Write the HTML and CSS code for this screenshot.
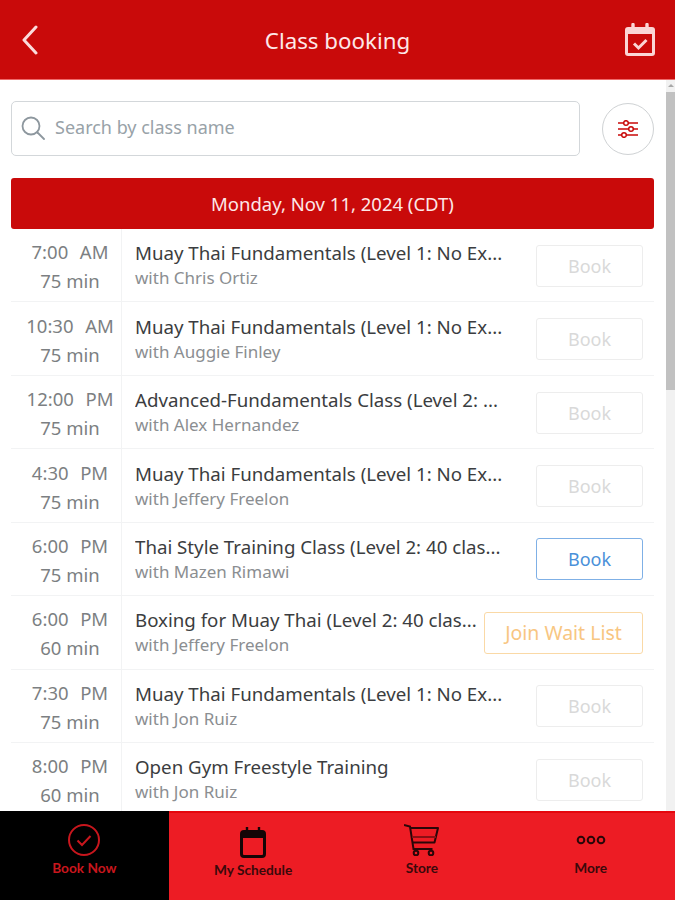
FILE: index.html
```html
<!DOCTYPE html>
<html lang="en">
<head>
<meta charset="utf-8">
<title>Class booking</title>
<link rel="stylesheet" href="styles.css">
</head>
<body>
<div class="app">
  <header class="topbar">
    <svg class="back" width="20" height="30" viewBox="0 0 20 30"><path d="M16 2 L4 15 L16 28" fill="none" stroke="#fbdcdc" stroke-width="3" stroke-linecap="round" stroke-linejoin="round"/></svg>
    <h1 class="title">Class booking</h1>
    <svg class="cal" width="30" height="34" viewBox="0 0 30 34"><path d="M8 1.500v5M22 1.500v5" stroke="#fbd5d5" stroke-width="3.400" stroke-linecap="round"/><path fill="#fbd5d5" d="M3 4h24a3 3 0 0 1 3 3v23a3 3 0 0 1-3 3H3a3 3 0 0 1-3-3V7a3 3 0 0 1 3-3z"/><rect x="3" y="11" width="24" height="19" fill="#c90a0a"/><path d="M9 20.500l4.500 4.500 8-8" fill="none" stroke="#fbd5d5" stroke-width="3"/></svg>
  </header>
  <main class="content">
    <div class="pane">
      <div class="search-row">
        <div class="search">
          <svg width="24" height="24" viewBox="0 0 24 24"><circle cx="10" cy="10" r="8.500" fill="none" stroke="#8d979e" stroke-width="1.800"/><path d="M16.500 16.500l6.500 6.500" stroke="#8d979e" stroke-width="1.800" stroke-linecap="round"/></svg>
          <span class="placeholder">Search by class name</span>
        </div>
        <div class="filter">
          <svg width="20" height="18" viewBox="0 0 20 18"><g stroke="#c90a0a" stroke-width="1.500" fill="none"><path d="M0 3h20M0 9h20M0 15h20"/><circle cx="8" cy="3" r="2.300" fill="#fff"/><circle cx="13" cy="9" r="2.300" fill="#fff"/><circle cx="6" cy="15" r="2.300" fill="#fff"/></g></svg>
        </div>
      </div>
      <div class="date">Monday, Nov 11, 2024 (CDT)</div>
      <div class="list">
        <div class="row"><div class="time"><span>7:00&nbsp; AM</span><span>75 min</span></div><div class="info"><div class="name">Muay Thai Fundamentals (Level 1: No Ex...</div><div class="coach">with Chris Ortiz</div></div><div class="btn off">Book</div></div>
        <div class="row"><div class="time"><span>10:30&nbsp; AM</span><span>75 min</span></div><div class="info"><div class="name">Muay Thai Fundamentals (Level 1: No Ex...</div><div class="coach">with Auggie Finley</div></div><div class="btn off">Book</div></div>
        <div class="row"><div class="time"><span>12:00&nbsp; PM</span><span>75 min</span></div><div class="info"><div class="name">Advanced-Fundamentals Class (Level 2: ...</div><div class="coach">with Alex Hernandez</div></div><div class="btn off">Book</div></div>
        <div class="row"><div class="time"><span>4:30&nbsp; PM</span><span>75 min</span></div><div class="info"><div class="name">Muay Thai Fundamentals (Level 1: No Ex...</div><div class="coach">with Jeffery Freelon</div></div><div class="btn off">Book</div></div>
        <div class="row"><div class="time"><span>6:00&nbsp; PM</span><span>75 min</span></div><div class="info"><div class="name">Thai Style Training Class (Level 2: 40 clas...</div><div class="coach">with Mazen Rimawi</div></div><div class="btn on">Book</div></div>
        <div class="row"><div class="time"><span>6:00&nbsp; PM</span><span>60 min</span></div><div class="info"><div class="name">Boxing for Muay Thai (Level 2: 40 clas...</div><div class="coach">with Jeffery Freelon</div></div><div class="btn wait">Join Wait List</div></div>
        <div class="row"><div class="time"><span>7:30&nbsp; PM</span><span>75 min</span></div><div class="info"><div class="name">Muay Thai Fundamentals (Level 1: No Ex...</div><div class="coach">with Jon Ruiz</div></div><div class="btn off">Book</div></div>
        <div class="row"><div class="time"><span>8:00&nbsp; PM</span><span>60 min</span></div><div class="info"><div class="name">Open Gym Freestyle Training</div><div class="coach">with Jon Ruiz</div></div><div class="btn off">Book</div></div>
      </div>
    </div>
    <div class="scrollbar"><div class="arrow"></div><div class="thumb"></div></div>
  </main>
  <nav class="tabs">
    <div class="tab active">
      <div class="ico"><svg width="32" height="32" viewBox="0 0 32 32"><circle cx="16" cy="16" r="15" fill="none" stroke="#c8161d" stroke-width="2"/><path d="M9.500 16.500l4.500 4.500 8.500-9" fill="none" stroke="#c8161d" stroke-width="2"/></svg></div>
      <span class="tab-label">Book Now</span>
    </div>
    <div class="tab low">
      <div class="ico"><svg width="26" height="31" viewBox="0 0 26 31"><path d="M7 0v6M19 0v6" stroke="#140506" stroke-width="2.400"/><rect x="1.500" y="4.500" width="23" height="25" rx="2.500" fill="none" stroke="#140506" stroke-width="3"/><path d="M1.500 8.500h23" stroke="#140506" stroke-width="5"/></svg></div>
      <span class="tab-label">My Schedule</span>
    </div>
    <div class="tab">
      <div class="ico"><svg width="35" height="32" viewBox="0 0 35 32"><g fill="none" stroke="#2a0608" stroke-width="2"><path d="M0 1l6 1.500 3.500 22.500h19"/><path d="M6.500 4h27.500l-3.500 14.500h-22" stroke-linejoin="round"/><path d="M8 13h24" stroke="#8a0f14"/><circle cx="12" cy="29" r="2.300"/><circle cx="27" cy="29" r="2.300"/></g></svg></div>
      <span class="tab-label">Store</span>
    </div>
    <div class="tab">
      <div class="ico"><svg width="30" height="10" viewBox="0 0 30 10"><g fill="none" stroke="#2a0608" stroke-width="2"><circle cx="5" cy="5" r="3.300"/><circle cx="15" cy="5" r="3.300"/><circle cx="25" cy="5" r="3.300"/></g></svg></div>
      <span class="tab-label">More</span>
    </div>
  </nav>
</div>
</body>
</html>
```

FILE: styles.css
```css
* { box-sizing: border-box; }
html, body { margin: 0; height: 100%; overflow: hidden; }
body { font-family: "Noto Sans", "Liberation Sans", sans-serif; background: #fff; }
.app { width: 675px; height: 900px; display: flex; flex-direction: column; }
.topbar { height: 80px; flex: none; background: #c90a0a; display: grid; grid-template-columns: 1fr auto 1fr; align-items: center; padding: 0 20px; border-bottom: 1px solid #ef6a6a; }
.title { margin: 0; padding-top: 1px; font-size: 22.300px; font-weight: 400; color: #fde8e8; }
.cal { justify-self: end; }
.content { flex: 1; min-height: 0; display: flex; overflow: hidden; }
.pane { flex: 1; padding: 21px 12px 0 11px; min-width: 0; }
.search-row { display: flex; align-items: center; justify-content: space-between; }
.search { width: 569px; height: 55px; border: 1.500px solid #d3d7da; border-radius: 5px; display: flex; align-items: center; gap: 10px; padding: 0 0 2px 9px; }
.placeholder { font-size: 18px; color: #98a2a8; padding-bottom: 2px; }
.filter { width: 52px; height: 52px; border: 1px solid #cfd2d4; border-radius: 50%; display: flex; align-items: center; justify-content: center; }
.date { margin-top: 22px; height: 51px; background: #c90a0a; border-radius: 3px; color: #fde8e8; font-size: 18.500px; display: flex; align-items: center; justify-content: center; }
.row { height: 73.450px; display: flex; align-items: center; border-bottom: 1px solid #f2f3f4; }
.time { width: 111px; height: 100%; flex: none; border-right: 1px solid #f2f3f4; display: flex; flex-direction: column; justify-content: center; align-items: center; gap: 4px; padding: 2px 0 0 8px; font-size: 18.500px; color: #7c7f82; line-height: 25px; }
.time span:first-child { word-spacing: 1px; }
.info { flex: 1; min-width: 0; padding: 0 0 0 13px; }
.name { font-size: 18.700px; line-height: 25px; color: #3b3d40; white-space: nowrap; overflow: hidden; }
.coach { font-size: 17px; line-height: 25px; color: #8b8e91; white-space: nowrap; }
.btn { flex: none; height: 42px; border: 1.500px solid; border-radius: 3px; display: flex; align-items: center; justify-content: center; font-size: 18px; margin: 1px 11px 0 0; }
.off { width: 107px; border-color: #ededed; color: #d9d9d9; }
.on { width: 107px; border-color: #7fb0e6; color: #4a90d9; }
.wait { width: 159px; border-color: #fad9a6; color: #f8c682; font-size: 19.500px; }
.scrollbar { width: 9px; flex: none; background: #f1f1f1; padding-top: 4px; }
.arrow { width: 0; height: 0; margin: 0 auto 5px; border: 3px solid transparent; border-top: 0; border-bottom: 3px solid #a8a8a8; }
.thumb { height: 298px; background: #c1c1c1; }
.tabs { height: 89px; flex: none; display: grid; grid-template-columns: repeat(4, 1fr); background: #ed1c24; border-top: 2px solid #e5060d; }
.tab { display: flex; flex-direction: column; align-items: center; padding-top: 11px; height: 87px; }
.tab.active { background: #000; margin-top: -2px; height: 89px; padding-top: 13px; }
.tab.low { padding-top: 13px; }
.ico { height: 32px; display: flex; align-items: center; justify-content: center; }
.tab-label { font-family: Lato, sans-serif; font-weight: 700; font-size: 13.700px; line-height: 16px; color: #3a090b; margin-top: 4px; }
.active .tab-label { color: #c8161d; }
```
